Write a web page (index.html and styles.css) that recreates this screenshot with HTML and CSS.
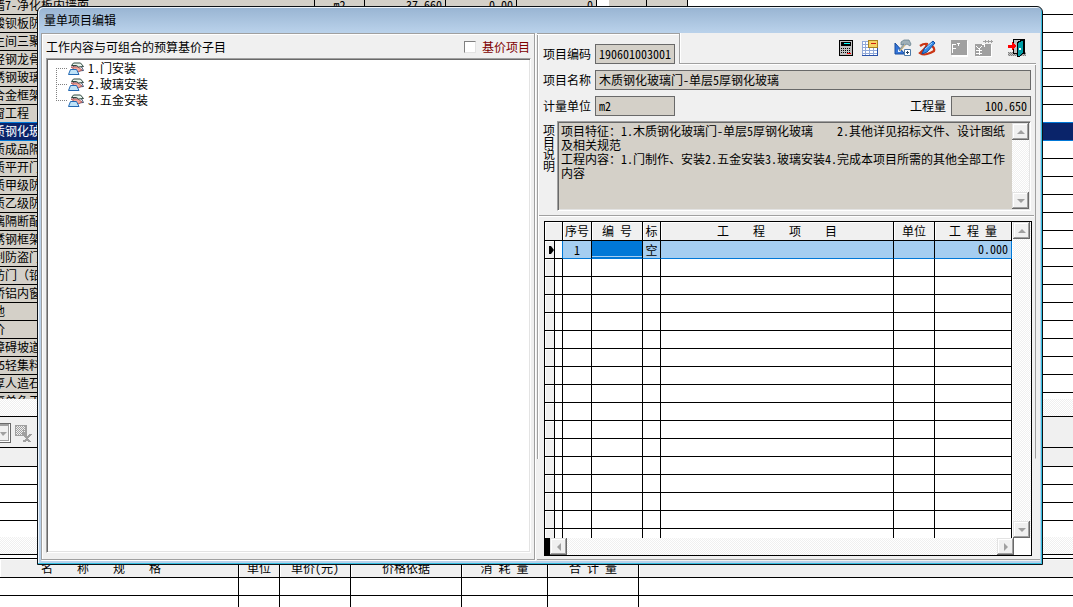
FILE: index.html
```html
<!DOCTYPE html>
<html lang="zh-CN">
<head>
<meta charset="utf-8">
<title>量单项目编辑</title>
<link rel="stylesheet" href="styles.css">
</head>
<body>
<main class="desk">
  <div class="list">
    <table class="sheet list-table">
      <colgroup><col class="w-name"><col class="w-unit"><col class="w-qty"><col class="w-price"><col class="w-sum"><col class="w-gap"><col class="w-a"><col class="w-b"><col></colgroup>
      <tr><td>墙7-净化板内墙面</td><td class="mid">m2</td><td class="num">37.660</td><td class="num">0.00</td><td class="num">0</td><td class="blank"></td><td class="tan"></td><td class="tan"></td><td class="blank"></td></tr>
      <tr><td>酸钡板防</td><td class="rest" colspan="8"></td></tr>
      <tr><td>生间三聚</td><td class="rest" colspan="8"></td></tr>
      <tr><td>轻钢龙骨</td><td class="rest" colspan="8"></td></tr>
      <tr><td>锈钢玻璃</td><td class="rest" colspan="8"></td></tr>
      <tr><td>合金框架</td><td class="rest" colspan="8"></td></tr>
      <tr class="before"><td>窗工程</td><td class="rest" colspan="8"></td></tr>
      <tr class="current"><td>质钢化玻</td><td class="rest" colspan="8"></td></tr>
      <tr><td>质成品隔</td><td class="rest" colspan="8"></td></tr>
      <tr><td>质平开门</td><td class="rest" colspan="8"></td></tr>
      <tr><td>质甲级防</td><td class="rest" colspan="8"></td></tr>
      <tr><td>质乙级防</td><td class="rest" colspan="8"></td></tr>
      <tr><td>璃隔断配</td><td class="rest" colspan="8"></td></tr>
      <tr><td>锈钢框架</td><td class="rest" colspan="8"></td></tr>
      <tr><td>制防盗门</td><td class="rest" colspan="8"></td></tr>
      <tr><td>防门（铅</td><td class="rest" colspan="8"></td></tr>
      <tr><td>桥铝内窗</td><td class="rest" colspan="8"></td></tr>
      <tr><td>地</td><td class="rest" colspan="8"></td></tr>
      <tr><td>价</td><td class="rest" colspan="8"></td></tr>
      <tr><td>障碍坡道</td><td class="rest" colspan="8"></td></tr>
      <tr><td>15轻集料</td><td class="rest" colspan="8"></td></tr>
      <tr><td>厚人造石</td><td class="rest" colspan="8"></td></tr>
      <tr><td>厚单色工</td><td class="rest" colspan="8"></td></tr>
    </table>
  </div>
  <div class="track"></div>
  <div class="desk-tools">
    <button class="combo" aria-label="展开"><svg width="8" height="5" viewBox="0 0 8 5"><path d="M0 0h7L3 4z" fill="#a0a0a0"/></svg></button>
    <svg width="18" height="18" viewBox="0 0 18 18" shape-rendering="crispEdges"><path d="M0 0h12v11H0z" fill="#a0a0a0"/><path d="M1 2h10M1 4h10M1 6h10M1 8h5M2 1v9M4 1v9M6 1v9M8 1v4" stroke="#f0f0f0" stroke-dasharray="1 1"/><path d="M8 9l7 8M16 9l-7 8M8 16h3" stroke="#a0a0a0" stroke-width="2" fill="none"/></svg>
  </div>
  <div class="mini">
    <div class="mini-head"></div><div class="mini-row"></div><div class="mini-row"></div><div class="mini-row"></div><div class="mini-last"></div>
  </div>
  <div class="track"></div>
  <table class="sheet price">
    <colgroup><col class="p-name"><col class="p-unit"><col class="p-price"><col class="p-basis"><col class="p-use"><col class="p-total"><col></colgroup>
    <tr><th>名    称    规    格</th><th>单位</th><th>单价(元)</th><th>价格依据</th><th>消 耗 量</th><th>合 计 量</th><th></th></tr>
    <tr><td></td><td></td><td></td><td></td><td></td><td></td><td></td></tr>
    <tr><td></td><td></td><td></td><td></td><td></td><td></td><td></td></tr>
  </table>
</main>

<section class="dialog" role="dialog" aria-labelledby="caption">
  <h1 class="caption" id="caption">量单项目编辑</h1>
  <div class="client">
    <section class="pane">
      <div class="pane-head">
        <span>工作内容与可组合的预算基价子目</span>
        <span class="check"><input type="checkbox" id="base"><label for="base">基价项目</label></span>
      </div>
      <ul class="tree">
        <li><svg class="leaf" width="16" height="13" viewBox="0 0 16 13"><path d="M5 4h8l2.500 4.500-6 .5z" fill="#fff" stroke="#405070"/><path d="M3 5h7l4 3-4 2z" fill="#f4a89c" stroke="#b06060"/><path d="M5.500 1h7l3 3.500-5 .5-2-1.500h-5z" fill="#e8f4ec" stroke="#304840"/><path d="M2.500 7.500h6l2.500 5H.5z" fill="#bfe3f8" stroke="#2469b3"/></svg><span>1.门安装</span></li>
        <li><svg class="leaf" width="16" height="13" viewBox="0 0 16 13"><path d="M5 4h8l2.500 4.500-6 .5z" fill="#fff" stroke="#405070"/><path d="M3 5h7l4 3-4 2z" fill="#f4a89c" stroke="#b06060"/><path d="M5.500 1h7l3 3.500-5 .5-2-1.500h-5z" fill="#e8f4ec" stroke="#304840"/><path d="M2.500 7.500h6l2.500 5H.5z" fill="#bfe3f8" stroke="#2469b3"/></svg><span>2.玻璃安装</span></li>
        <li><svg class="leaf" width="16" height="13" viewBox="0 0 16 13"><path d="M5 4h8l2.500 4.500-6 .5z" fill="#fff" stroke="#405070"/><path d="M3 5h7l4 3-4 2z" fill="#f4a89c" stroke="#b06060"/><path d="M5.500 1h7l3 3.500-5 .5-2-1.500h-5z" fill="#e8f4ec" stroke="#304840"/><path d="M2.500 7.500h6l2.500 5H.5z" fill="#bfe3f8" stroke="#2469b3"/></svg><span>3.五金安装</span></li>
      </ul>
    </section>

    <section class="detail">
      <div class="top">
        <div class="code"><label for="code">项目编码</label><input class="box short" id="code" value="190601003001" readonly></div>
        <div class="tools">
          <button aria-label="计算器"><svg width="16" height="18" viewBox="0 0 16 18" shape-rendering="crispEdges"><rect x="1.5" y="1.5" width="13" height="15" rx="1" fill="#c0c0c0" stroke="#000"/><path d="M3 3h10v4H3z" fill="#000"/><path d="M6 4.500h6" stroke="#0ff"/><path d="M3 9.500h10M3 11.500h10M3 13.500h10" stroke="#000" stroke-dasharray="1 1"/><path d="M9 14.500h4" stroke="#f00"/></svg></button>
          <button class="grid-icon" aria-label="表格"><svg width="18" height="18" viewBox="0 0 18 18" shape-rendering="crispEdges"><path d="M.5 2.500h15v14H.5z" fill="#fff" stroke="#90a8d8"/><path d="M1 5.500h15M1 8.500h15M1 11.500h15M1 14.500h15M3.500 3v13M7.500 3v13M11.500 3v13" stroke="#90a8d8" fill="none"/><path d="M0 16.500h16M15.500 9v8" stroke="#2850a8" fill="none"/><path d="M6.500 1.500h9v7h-9z" fill="#f7d466" stroke="#a88222"/><path d="M9 4h5" stroke="#d02010" stroke-width="1"/></svg></button>
          <button class="apart" aria-label="工具"><svg width="18" height="18" viewBox="0 0 18 18"><path d="M1 4v11h10z" fill="#3474d8" stroke="#184c9c"/><path d="M4 10v3h3z" fill="#e8f2ff"/><path d="M7 3l3-2h5l2 4-1 2-3-2-2 1-5 6-1-1 5-6-3 1z" fill="#9eb0b8" stroke="#5c7888" stroke-width=".7"/><path d="M11 6l-5 6" stroke="#e0bc70"/><path d="M10.500 10.500h6v6h-6z" fill="#fff" stroke="#4c79a8"/><path d="M12 13.500h3M13.500 12v3" stroke="#246"/></svg></button>
          <button aria-label="编辑"><svg width="18" height="18" viewBox="0 0 18 18"><path d="M2 7q4-3 8-2M8 5q2 2-6 9 3 2 7 1t7-3q1-3-2-5" fill="none" stroke="#ca3515" stroke-width="2.200"/><path d="M4 15l2-5 9-8 2 2-8 9z" fill="#368ce8" stroke="#104ca0"/><path d="M7 10l7-6" stroke="#a8dcff"/></svg></button>
          <button class="apart" aria-label="公式" disabled><svg width="18" height="18" viewBox="0 0 18 18" shape-rendering="crispEdges"><path d="M2 2h16v16H2z" fill="#fff"/><path d="M1 1h16v15H1z" fill="#a0a0a0"/><path d="M2.500 14V5.500H6M3 9.500h3M7 4.500h3M8.500 5v2" fill="none" stroke="#fff"/></svg></button>
          <button class="wide" aria-label="费用" disabled><svg width="20" height="18" viewBox="0 0 20 18" shape-rendering="crispEdges"><path d="M2 6h16v12H2z" fill="#fff"/><path d="M1 5h16v12H1z" fill="#a0a0a0"/><path d="M9 2.500h10M11.500 1v3M14.500 1v3M17.500 1v3" stroke="#a0a0a0"/><path d="M2 7l3 3 3-3M5 10v6M2 11h6M2 14h6M8 5h2v3" stroke="#fff" fill="none"/></svg></button>
          <button class="exit" aria-label="退出"><svg width="18" height="18" viewBox="0 0 18 18" shape-rendering="crispEdges"><path d="M0 13h18v4H0z" fill="#c0c0c0"/><path d="M0 13.500h18M1 14.500h17M0 15.500h18M1 16.500h17" stroke="#808080" stroke-dasharray="1 1"/><path d="M5.500.5h11v14h-11z" fill="#c0c0c0" stroke="#000"/><path d="M9.500 3.500l6-3v13l-4 4h-2z" fill="#00a0a8" stroke="#000"/><path d="M11 9h2v2h-2z" fill="#fff"/><path d="M0 6h4V3l4 4-4 5v-3H0z" fill="#f00"/></svg></button>
        </div>
      </div>
      <div class="form">
        <div class="line"><label for="name">项目名称</label><input class="box long" id="name" value="木质钢化玻璃门-单层5厚钢化玻璃" readonly></div>
        <div class="line"><label for="unit">计量单位</label><input class="box short" id="unit" value="m2" readonly><label class="push" for="qty">工程量</label><input class="box short right" id="qty" value="100.650" readonly></div>
        <div class="note">
          <label for="note">项目说明</label>
          <div class="memo">
            <textarea id="note" readonly>项目特征：1.木质钢化玻璃门-单层5厚钢化玻璃    2.其他详见招标文件、设计图纸及相关规范
工程内容：1.门制作、安装2.五金安装3.玻璃安装4.完成本项目所需的其他全部工作内容</textarea>
            <div class="vbar"><button class="arrow up" aria-label="向上"></button><button class="arrow down" aria-label="向下"></button></div>
          </div>
        </div>
      </div>
      <hr class="rule">
      <div class="grid">
        <div class="grid-main">
          <div class="grid-view">
            <table class="sheet items">
              <colgroup><col class="g-mark"><col class="g-slim"><col class="g-no"><col class="g-code"><col class="g-flag"><col><col class="g-unit"><col class="g-qty"></colgroup>
              <tr><th colspan="2"></th><th>序号</th><th>编 号</th><th>标</th><th>工    程    项    目</th><th>单位</th><th>工 程 量</th></tr>
              <tr class="active"><td><svg class="here" width="5" height="8" viewBox="0 0 5 8"><path d="M0 0h2l3 4-3 4H0z"/></svg></td><td></td><td class="mid">1</td><td class="pick"></td><td class="mid">空</td><td></td><td></td><td class="num">0.000</td></tr>
              <tr><td></td><td></td><td></td><td></td><td></td><td></td><td></td><td></td></tr>
              <tr><td></td><td></td><td></td><td></td><td></td><td></td><td></td><td></td></tr>
              <tr><td></td><td></td><td></td><td></td><td></td><td></td><td></td><td></td></tr>
              <tr><td></td><td></td><td></td><td></td><td></td><td></td><td></td><td></td></tr>
              <tr><td></td><td></td><td></td><td></td><td></td><td></td><td></td><td></td></tr>
              <tr><td></td><td></td><td></td><td></td><td></td><td></td><td></td><td></td></tr>
              <tr><td></td><td></td><td></td><td></td><td></td><td></td><td></td><td></td></tr>
              <tr><td></td><td></td><td></td><td></td><td></td><td></td><td></td><td></td></tr>
              <tr><td></td><td></td><td></td><td></td><td></td><td></td><td></td><td></td></tr>
              <tr><td></td><td></td><td></td><td></td><td></td><td></td><td></td><td></td></tr>
              <tr><td></td><td></td><td></td><td></td><td></td><td></td><td></td><td></td></tr>
              <tr><td></td><td></td><td></td><td></td><td></td><td></td><td></td><td></td></tr>
              <tr><td></td><td></td><td></td><td></td><td></td><td></td><td></td><td></td></tr>
              <tr><td></td><td></td><td></td><td></td><td></td><td></td><td></td><td></td></tr>
              <tr><td></td><td></td><td></td><td></td><td></td><td></td><td></td><td></td></tr>
              <tr><td></td><td></td><td></td><td></td><td></td><td></td><td></td><td></td></tr>
            </table>
          </div>
          <div class="vbar"><button class="arrow up" aria-label="向上"></button><button class="arrow down" aria-label="向下"></button></div>
        </div>
        <div class="hbar"><button class="arrow back" aria-label="向左"></button><button class="arrow next" aria-label="向右"></button></div>
      </div>
    </section>
  </div>
</section>
</body>
</html>
```

FILE: styles.css
```css
* { box-sizing: border-box; }

body {
  margin: 0;
  height: 100vh;
  overflow: hidden;
  position: relative;
  background: #fff;
  color: #000;
  font: 12px/14px "Noto Sans Mono CJK SC", "Noto Sans CJK SC", "Liberation Sans", sans-serif;
}

input, textarea, button { font: inherit; color: inherit; }
button { padding: 0; border: 0; background: none; }
svg { display: block; }

/* shared table look */
.sheet {
  width: 100%;
  table-layout: fixed;
  border-collapse: separate;
  border-spacing: 0;
}
.sheet td, .sheet th {
  height: 18px;
  padding: 0;
  border-right: 1px solid #000;
  border-bottom: 1px solid #000;
  line-height: 14px;
  font-weight: normal;
  white-space: pre;
  overflow: hidden;
}
.sheet th { background: #f0f0f0; height: 19px; box-shadow: inset 1px 1px #fff; text-align: center; }
.sheet .mid { text-align: center; }
.sheet .num { text-align: right; padding-right: 3px; }

/* main window */
.desk { height: 100%; display: flex; flex-direction: column; }
.list { flex: 1; min-height: 0; overflow: hidden; }
.list-table { margin-top: -3px; }
.list-table td { background: #d4d0c8; padding-bottom: 2px; }
.list-table td:first-child { text-indent: -7px; }
.list-table .rest, .list-table .blank { background: #fff; border-right: 0; }
.list-table .before td { border-bottom-color: #0078d7; }
.list-table .current td { background: #0a246a; color: #fff; border-bottom-color: #0078d7; }
.w-name { width: 315px; }
.w-unit { width: 50px; }
.w-qty { width: 81px; }
.w-price { width: 71px; }
.w-sum { width: 80px; }
.w-gap { width: 12px; }
.w-a { width: 38px; }
.w-b { width: 41px; }

.track, .vbar, .hbar {
  background: repeating-conic-gradient(#fff 0 25%, #f0f0f0 0 50%) 0 0 / 2px 2px;
}
.track { height: 18px; border-bottom: 1px solid #000; }
.desk-tools {
  display: flex;
  gap: 4px;
  height: 31px;
  padding-top: 6px;
  align-items: flex-start;
  background: #f0f0f0;
  border-bottom: 1px solid #000;
}
.desk-tools svg { margin-top: 2px; }
.combo {
  width: 11px;
  height: 20px;
  border: 1px solid #696969;
  border-left: 0;
  box-shadow: inset -1px -1px #fff, inset -2px -2px #a0a0a0, inset 0 2px #a0a0a0;
}
.mini-head { height: 19px; background: #f0f0f0; border-bottom: 1px solid #000; }
.mini-row { height: 18px; border-bottom: 1px solid #000; }
.mini-last { height: 16px; }
.price { margin-top: 3px; border-top: 1px solid #000; }
.price tr:last-child td { height: 11px; border-bottom: 0; }
.price td:last-child, .price th:last-child { border-right: 0; }
.p-name { width: 239px; }
.p-unit { width: 41px; }
.p-price { width: 71px; }
.p-basis { width: 111px; }
.p-use { width: 86px; }
.p-total { width: 91px; }
.price th:first-child { padding-right: 36px; }

/* dialog window */
.dialog {
  position: absolute;
  inset: 6px 30px 42px 37px;
  display: flex;
  flex-direction: column;
  padding: 0 2px 3px 3px;
  border: 1px solid #0c1116;
  border-radius: 6px 6px 0 0;
  background: linear-gradient(#98b4d2, #b9d1ea 25px);
  box-shadow: inset -1px -1px #35bfe0, inset 1px 1px #eef4fa;
}
.caption {
  height: 26px;
  margin: 0;
  padding: 6px 0 0 3px;
  font-size: 12px;
  line-height: 14px;
  font-weight: normal;
}
.client {
  flex: 1;
  min-height: 0;
  display: grid;
  grid-template-columns: 495fr 504fr;
  grid-template-rows: minmax(0, 1fr);
  background: #f0f0f0;
}
.pane {
  min-width: 0;
  display: flex;
  flex-direction: column;
  padding: 1px 3px 6px 4px;
  border: 1px solid #a0a0a0;
  box-shadow: inset 1px 1px #fff, 1px 1px #fff;
  margin: 0 1px 1px 0;
}
.pane-head {
  display: flex;
  justify-content: space-between;
  align-items: center;
  height: 23px;
}
.check { display: flex; align-items: center; gap: 6px; padding-right: 1px; color: #800000; }
.check input {
  appearance: none;
  width: 12px;
  height: 12px;
  margin: 0;
  background: #fff;
  border: 1px solid #e3e3e3;
  border-top-color: #808080;
  border-left-color: #808080;
}
.tree {
  flex: 1;
  margin: 0;
  padding: 1px 0 0 9px;
  list-style: none;
  background: #fff;
  border: 1px solid #a0a0a0;
  border-color: #a0a0a0 #fff #fff #a0a0a0;
  box-shadow: inset 1px 1px #696969, inset -1px -1px #e3e3e3;
}
.tree li {
  position: relative;
  display: flex;
  align-items: center;
  gap: 4px;
  height: 16px;
  padding-left: 12px;
}
.tree li::before {
  content: "";
  position: absolute;
  left: 0;
  top: 8px;
  width: 12px;
  height: 16px;
  background:
    repeating-linear-gradient(90deg, #808080 0 1px, transparent 1px 2px) 0 0 / 12px 1px no-repeat,
    repeating-linear-gradient(#808080 0 1px, transparent 1px 2px) 0 0 / 1px 16px no-repeat;
}
.tree li:last-child::before { height: 1px; }

/* item details */
.detail {
  min-width: 0;
  display: flex;
  flex-direction: column;
  margin: 0 0 1px 1px;
  padding-right: 4px;
  border-bottom: 1px solid #a0a0a0;
  background:
    linear-gradient(#a0a0a0, #a0a0a0) 0 0 / 1px 81% no-repeat,
    linear-gradient(#fff, #fff) 1px 0 / 1px 81% no-repeat,
    linear-gradient(#a0a0a0, #a0a0a0) calc(100% - 4px) 31px / 1px 75% no-repeat;
}
.top { display: flex; height: 31px; }
.code {
  display: flex;
  flex: 0 0 142px;
  padding: 10px 0 0 6px;
  border-top: 1px solid #a0a0a0;
  box-shadow: inset 0 1px #fff;
}
.code label, .line label { width: 52px; line-height: 20px; height: 20px; }
.tools {
  flex: 1;
  display: flex;
  justify-content: flex-end;
  align-items: flex-start;
  gap: 6px;
  padding: 6px 10px 0 0;
  border-left: 1px solid #a0a0a0;
  border-bottom: 1px solid #a0a0a0;
  box-shadow: inset 1px 0 #fff, 0 1px #fff;
}
.tools .apart { margin-left: 8px; }
.tools .exit { margin-left: 8px; }
.tools .grid-icon { margin-left: 2px; }
.box {
  height: 20px;
  min-width: 0;
  padding: 0 3px 2px;
  border: 1px solid #696969;
  border-radius: 0;
  background: #d4d0c8;
  outline: 0;
}
.short { width: 80px; }
.long { flex: 1; }
.right { text-align: right; }
.form { display: flex; flex-direction: column; gap: 6px; padding: 6px 5px 0 6px; }
.line { display: flex; }
.line .push { width: 41px; margin-left: auto; }
.note { display: flex; gap: 2px; margin-top: -1px; }
.note > label { width: 12px; padding-top: 3px; line-height: 12px; }
.memo {
  flex: 1;
  display: flex;
  height: 90px;
  padding: 1px;
  background: #d4d0c8;
  border: 1px solid #a0a0a0;
  border-color: #a0a0a0 #fff #fff #a0a0a0;
  box-shadow: inset 1px 1px #696969, inset -1px -1px #e3e3e3;
}
.memo textarea {
  flex: 1;
  min-width: 0;
  margin: 0;
  padding: 1px 0 0 2px;
  border: 0;
  resize: none;
  overflow: hidden;
  background: none;
  line-height: 14px;
  outline: 0;
}
.vbar { display: flex; flex-direction: column; justify-content: space-between; width: 17px; }
.arrow {
  display: grid;
  place-items: center;
  width: 17px;
  height: 17px;
  background: #f0f0f0;
  box-shadow: inset -1px -1px #696969, inset 1px 1px #e3e3e3, inset -2px -2px #a0a0a0, inset 2px 2px #fff;
}
.arrow::before { content: ""; border: 4px solid transparent; }
.up::before { border-top: 0; border-bottom-color: #a0a0a0; }
.down::before { border-bottom: 0; border-top-color: #a0a0a0; }
.back::before { border-left: 0; border-right-color: #a0a0a0; }
.next::before { border-right: 0; border-left-color: #a0a0a0; }
.rule { width: calc(100% - 4px); margin: 4px 2px; border: 0; border-top: 1px solid #a0a0a0; border-bottom: 1px solid #fff; }

.grid {
  flex: 1;
  min-height: 0;
  display: flex;
  flex-direction: column;
  margin: 0 4px 3px 7px;
  border: 1px solid #000;
  background: #fff;
}
.grid-main { flex: 1; min-height: 0; display: flex; }
.grid-view { flex: 1; min-width: 0; overflow: hidden; padding-right: 1px; }
.items td:first-child { background: #f0f0f0; box-shadow: inset 1px 1px #fff; }
.items .active td { border-bottom-color: #0078d7; background: #a5cef1; }
.items .active td:nth-child(1) { background: #f0f0f0; border-bottom-color: #000; }
.items .active td:nth-child(2) { background: #fff; border-bottom-color: #000; border-right-color: #0078d7; }
.items .active td:last-child { border-right-color: #0078d7; padding-bottom: 2px; }
.items .active .pick { background: #0078d7; box-shadow: inset 0 -1px #0078d7, inset 0 -2px #a5cef1; }
.here { margin-left: 4px; }
.g-mark { width: 10px; }
.g-slim { width: 8px; }
.g-no { width: 29px; }
.g-code { width: 51px; }
.g-flag { width: 18px; }
.g-unit { width: 41px; }
.g-qty { width: 77px; }
.grid .vbar { width: 18px; }
.hbar {
  flex: none;
  display: flex;
  justify-content: space-between;
  height: 17px;
  border-left: 5px solid #000;
  border-right: 17px solid #fff;
}
```
